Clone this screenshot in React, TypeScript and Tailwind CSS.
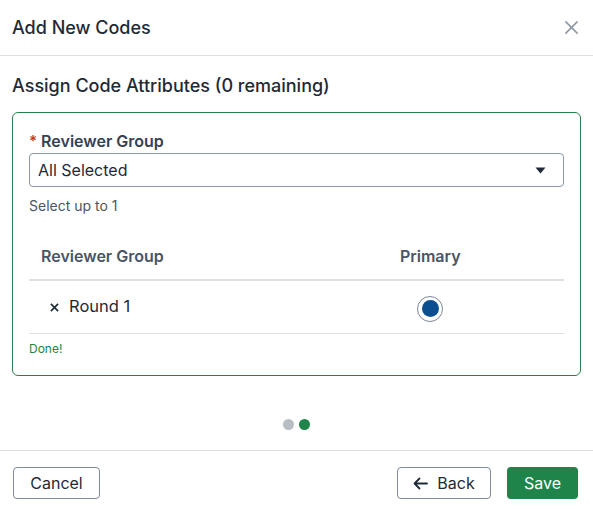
import { useState } from 'react';

const rows = [{ id: 'round-1', name: 'Round 1' }];

export default function App() {
  const [primary, setPrimary] = useState('round-1');

  return (
    <div className="w-[593px] h-[513px] bg-white flex flex-col text-[#1f2a37]" style={{ fontFamily: 'Inter, "Noto Sans", sans-serif' }}>
      <header className="h-[56px] shrink-0 flex items-center justify-between pl-3 pr-[14px] border-b border-[#dcdfe3]">
        <h1 className="text-[18px] leading-6 font-medium">Add New Codes</h1>
        <button type="button" className="text-[#8a96a3]" title="Close">
          <svg className="w-[15px] h-[15px]" viewBox="0 0 16 16" fill="none" stroke="currentColor" strokeWidth={1.6} strokeLinecap="round">
            <path d="M2 2l12 12M14 2L2 14" />
          </svg>
        </button>
      </header>

      <div className="flex-1 px-3 pt-[18px]">
        <h2 className="text-[18px] leading-6 font-medium">Assign Code Attributes (0 remaining)</h2>

        <div className="mt-[14px] border border-[#24804a] rounded-md px-4 pt-[18px] pb-[18px]">
          <label className="flex items-center text-[16px] leading-5 font-semibold text-[#374151]">
            <span className="text-[#c0392b] mr-1 text-[15px]">*</span>
            Reviewer Group
          </label>
          <div className="mt-[2px] h-[34px] border border-[#8a98a8] rounded-[4px] flex items-center justify-between pl-2 pr-[17px]">
            <span className="text-[16px]">All Selected</span>
            <svg className="w-[11px] h-[7px] text-[#1f2a37]" viewBox="0 0 11 7" fill="currentColor">
              <path d="M0.5 0.5h10L5.5 6.5z" />
            </svg>
          </div>
          <div className="mt-[10px] text-[14px] leading-[18px] text-[#4b5563]">Select up to 1</div>

          <div className="mt-[19px]">
            <div className="grid grid-cols-2 border-b-2 border-[#dde0e4] pt-3 pb-[13px] text-[16px] leading-5 font-semibold text-[#4a5565]">
              <div className="pl-3">Reviewer Group</div>
              <div className="text-center">Primary</div>
            </div>
            {rows.map((row) => (
              <div key={row.id} className="grid grid-cols-2 items-center h-[53px] border-b border-[#dde0e4]">
                <div className="flex items-center pl-[21px] gap-[10px] text-[16.5px]">
                  <svg className="w-[9px] h-[9px]" viewBox="0 0 10 10" fill="none" stroke="currentColor" strokeWidth={1.8}>
                    <path d="M1 1l8 8M9 1L1 9" />
                  </svg>
                  <span className="-mt-px">{row.name}</span>
                </div>
                <div className="flex justify-center pt-[3px]">
                  <button
                    type="button"
                    onClick={() => setPrimary(row.id)}
                    className="w-[26px] h-[26px] rounded-full border border-[#7d8793] flex items-center justify-center bg-white"
                  >
                    {primary === row.id && <span className="w-[17px] h-[17px] rounded-full bg-[#0b4f91]" />}
                  </button>
                </div>
              </div>
            ))}
          </div>
          <div className="mt-[7px] text-[12px] leading-4 text-[#1e8449]">Done!</div>
        </div>

        <div className="mt-[43px] flex justify-center gap-[5px]">
          <span className="w-[11px] h-[11px] rounded-full bg-[#b8bec4]" />
          <span className="w-[11px] h-[11px] rounded-full bg-[#1e8449]" />
        </div>
      </div>

      <footer className="h-[63px] shrink-0 border-t border-[#dcdfe3] flex items-start justify-between pl-[13px] pr-[15px] pt-4">
        <button type="button" className="h-[32px] w-[87px] border border-[#7d8b9b] rounded-[4px] text-[16px]">Cancel</button>
        <div className="flex gap-4">
          <button type="button" className="h-[32px] w-[94px] border border-[#7d8b9b] rounded-[4px] text-[16px] flex items-center justify-center gap-[9px]">
            <svg className="w-[15px] h-[13px]" viewBox="0 0 15 13" fill="none" stroke="currentColor" strokeWidth={1.8} strokeLinecap="round" strokeLinejoin="round">
              <path d="M14 6.5H1.5M6.5 1.5l-5 5 5 5" />
            </svg>
            Back
          </button>
          <button type="button" className="h-[32px] w-[71px] rounded-[4px] bg-[#1e8449] text-white text-[16px]">Save</button>
        </div>
      </footer>
    </div>
  );
}
